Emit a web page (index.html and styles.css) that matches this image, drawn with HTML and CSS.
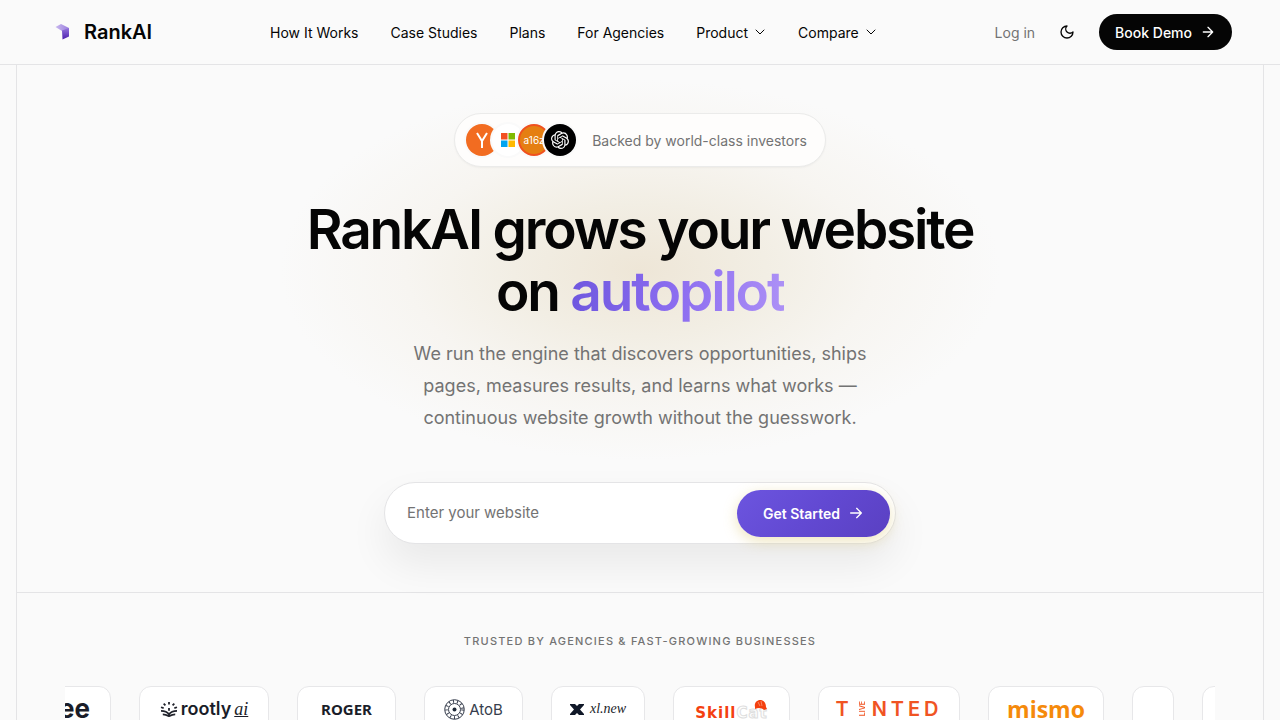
FILE: index.html
```html
<!DOCTYPE html>
<html lang="en">
<head>
  <meta charset="UTF-8" />
  <meta name="viewport" content="width=device-width, initial-scale=1.0"/>
  <title>RankAI</title>
  <link rel="stylesheet" href="styles.css">
</head>
<body>
  <header class="site-header">
    <a class="brand" href="#">
      <svg class="brand-mark" width="28" height="28" viewBox="0 0 28 28" aria-hidden="true">
        <defs>
          <linearGradient id="markTop" x1="0" y1="0" x2="1" y2="0"><stop offset="0" stop-color="#c9b9ee"/><stop offset="1" stop-color="#9a7ede"/></linearGradient>
          <linearGradient id="markSide" x1="0" y1="0" x2="0" y2="1"><stop offset="0" stop-color="#9474dd"/><stop offset="1" stop-color="#4b1fae"/></linearGradient>
        </defs>
        <path d="M7.500 9 13 6l8 4v5L14 13Z" fill="url(#markTop)"/>
        <path d="M14 12.500l7-2.500v8.500L14.500 21.500Z" fill="url(#markSide)"/>
      </svg>
      <span>RankAI</span>
    </a>
    <nav class="main-nav">
      <a href="#">How It Works</a>
      <a href="#">Case Studies</a>
      <a href="#">Plans</a>
      <a href="#">For Agencies</a>
      <button type="button">Product <svg class="icon" width="12" height="12" viewBox="0 0 24 24"><path d="m4 8 8 8 8-8"/></svg></button>
      <button type="button">Compare <svg class="icon" width="12" height="12" viewBox="0 0 24 24"><path d="m4 8 8 8 8-8"/></svg></button>
    </nav>
    <div class="actions">
      <a class="login" href="#">Log in</a>
      <button class="theme-toggle" type="button" aria-label="Toggle theme">
        <svg class="icon" width="16" height="16" viewBox="0 0 24 24"><path d="M12 3a6 6 0 0 0 9 9 9 9 0 1 1-9-9Z"/></svg>
      </button>
      <a class="demo-btn" href="#">Book Demo <svg class="icon" width="16" height="16" viewBox="0 0 24 24"><path d="M5 12h14M12 5l7 7-7 7"/></svg></a>
    </div>
  </header>

  <main class="page">
    <section class="hero">
      <div class="investors">
        <div class="avatars">
          <span class="avatar avatar-yc"><svg width="14" height="18" viewBox="0 0 14 18" fill="none" stroke="#fff" stroke-width="2"><path d="M2 2l5 8 5-8M7 10v7"/></svg></span>
          <span class="avatar avatar-ms">
            <svg width="14" height="14" viewBox="0 0 14 14"><path fill="#f25022" d="M0 0h6.500v6.500H0z"/><path fill="#7fba00" d="M7.500 0H14v6.500H7.500z"/><path fill="#00a4ef" d="M0 7.500h6.500V14H0z"/><path fill="#ffb900" d="M7.500 7.500H14V14H7.500z"/></svg>
          </span>
          <span class="avatar avatar-a16z">a16z</span>
          <span class="avatar avatar-openai">
            <svg width="18" height="18" viewBox="0 0 24 24" fill="#fff"><path d="M22.282 9.821a5.985 5.985 0 0 0-.516-4.910 6.046 6.046 0 0 0-6.510-2.900A6.065 6.065 0 0 0 4.981 4.182a5.985 5.985 0 0 0-3.998 2.900 6.046 6.046 0 0 0 .743 7.097 5.980 5.980 0 0 0 .510 4.911 6.051 6.051 0 0 0 6.515 2.900A5.985 5.985 0 0 0 13.260 24a6.056 6.056 0 0 0 5.772-4.206 5.990 5.990 0 0 0 3.997-2.900 6.056 6.056 0 0 0-.747-7.073zM13.260 22.430a4.476 4.476 0 0 1-2.876-1.040l.141-.081 4.779-2.758a.795.795 0 0 0 .392-.681v-6.737l2.020 1.168a.071.071 0 0 1 .038.052v5.583a4.504 4.504 0 0 1-4.494 4.494zM3.600 18.304a4.470 4.470 0 0 1-.535-3.014l.142.085 4.783 2.759a.771.771 0 0 0 .780 0l5.843-3.369v2.332a.080.080 0 0 1-.033.062L9.740 19.950a4.500 4.500 0 0 1-6.140-1.646zM2.340 7.896a4.485 4.485 0 0 1 2.366-1.973V11.600a.766.766 0 0 0 .388.676l5.815 3.355-2.020 1.168a.076.076 0 0 1-.071 0l-4.830-2.786A4.504 4.504 0 0 1 2.340 7.872zm16.597 3.855l-5.833-3.387L15.119 7.200a.076.076 0 0 1 .071 0l4.830 2.791a4.494 4.494 0 0 1-.676 8.105v-5.678a.790.790 0 0 0-.407-.667zm2.010-3.023l-.141-.085-4.774-2.782a.776.776 0 0 0-.785 0L9.409 9.230V6.897a.066.066 0 0 1 .028-.061l4.830-2.787a4.500 4.500 0 0 1 6.680 4.660zm-12.640 4.135l-2.020-1.164a.080.080 0 0 1-.038-.057V6.075a4.500 4.500 0 0 1 7.375-3.453l-.142.080L8.704 5.460a.795.795 0 0 0-.393.681zm1.097-2.365l2.602-1.500 2.607 1.500v2.999l-2.597 1.500-2.607-1.500Z"/></svg>
          </span>
        </div>
        <span>Backed by world-class investors</span>
      </div>

      <h1>RankAI grows your website<br>on <span class="accent">autopilot</span></h1>
      <p class="lead">We run the engine that discovers opportunities, ships pages, measures results, and learns what works — continuous website growth without the guesswork.</p>

      <form class="signup">
        <input type="text" placeholder="Enter your website" aria-label="Your website">
        <button type="submit">Get Started <svg class="icon" width="16" height="16" viewBox="0 0 24 24"><path d="M4 12h16M13 5l7 7-7 7"/></svg></button>
      </form>
    </section>

    <section class="trusted">
      <h2>Trusted by agencies &amp; fast-growing businesses</h2>
      <div class="marquee">
        <div class="track">
          <div class="logo logo-ee">ee</div>
          <div class="logo logo-rootly">
            <svg width="18" height="16" viewBox="0 0 20 18" fill="none" stroke="#20222b" stroke-width="2"><path d="M1 11c4 0 7 1 9 4 2-3 5-4 9-4M3 15c3 0 5 1 7 2 2-1 4-2 7-2M10 1v3M4 3l2 2M16 3l-2 2M1 7l3 1M19 7l-3 1M10 8v3"/></svg>
            <span>rootly</span><em>ai</em>
          </div>
          <div class="logo logo-roger">ROGER</div>
          <div class="logo logo-atob">
            <svg width="21" height="21" viewBox="0 0 21 21" fill="none" stroke="#373e4d"><circle cx="10.500" cy="10.500" r="9.800"/><circle cx="10.500" cy="10.500" r="6"/><circle cx="10.500" cy="10.500" r="8" stroke-width="3" stroke-dasharray="1 3"/><circle cx="10.500" cy="10.500" r="2" fill="#1f2937" stroke="none"/></svg>
            <span>AtoB</span>
          </div>
          <div class="logo logo-xl">
            <svg width="14" height="11" viewBox="0 0 14 11" fill="#101828"><path d="M0 0h5l2 2 2-2h5v1l-4 4.500L14 10v1H9L7 9l-2 2H0v-1l4-4.500L0 1z"/></svg>
            <em>xl.new</em>
          </div>
          <div class="logo logo-skillcat">
            <span>Skill</span><span class="cat">Cat</span>
            <svg class="cap" width="13" height="10" viewBox="0 0 13 10"><path d="M1 7C0 3 3 0 6 0c4 0 6 3 6 7l1 2-3 1C8 8 5 7 1 9Z" fill="#f4400f"/><path d="M4 2l2 4M7 1l1 5" stroke="#fa8563" fill="none"/></svg>
          </div>
          <div class="logo logo-tinted"><span>T</span><small>LIVE</small><span>NTED</span></div>
          <div class="logo logo-mismo">mismo</div>
          <div class="logo logo-blank"></div>
          <div class="logo logo-blank"></div>
        </div>
      </div>
    </section>
  </main>
</body>
</html>
```

FILE: styles.css
```css
* { box-sizing: border-box; }
body {
  margin: 0;
  background: #fafafa;
  color: #050505;
  font-family: Inter, "Liberation Sans", sans-serif;
  font-size: 14px;
  overflow-x: hidden;
}
a { color: inherit; text-decoration: none; }
button, input { font: inherit; color: inherit; border: 0; background: none; padding: 0; }
button { cursor: pointer; }
.icon { fill: none; stroke: currentColor; stroke-width: 2; stroke-linecap: round; stroke-linejoin: round; }

/* header */
.site-header {
  display: flex;
  align-items: center;
  justify-content: space-between;
  height: 65px;
  padding: 0 48px;
  border-bottom: 1px solid #e4e4e6;
}
.brand { display: flex; align-items: center; gap: 8px; font-size: 20px; font-weight: 600; }
.main-nav { display: flex; align-items: center; gap: 32px; }
.main-nav button { display: flex; align-items: center; gap: 6px; }
.actions { display: flex; align-items: center; gap: 24px; }
.login { color: #737373; }
.theme-toggle { display: flex; }
.demo-btn {
  display: flex;
  align-items: center;
  gap: 8px;
  height: 36px;
  padding: 0 16px;
  border-radius: 18px;
  background: #050505;
  color: #fff;
  font-weight: 500;
}

/* hero */
.page { margin: 0 16px; border: 1px solid #e4e4e6; border-width: 0 1px; }
.hero {
  display: flex;
  flex-direction: column;
  align-items: center;
  padding: 48px 24px;
  border-bottom: 1px solid #e4e4e6;
  text-align: center;
  background: radial-gradient(ellipse 360px 190px at 50% 205px, #eee6d7 0%, #f2eee4 35%, #f7f5f1 65%, #fafafa 100%);
}
.investors {
  display: flex;
  align-items: center;
  gap: 16px;
  height: 54px;
  padding: 0 18px 0 11px;
  border: 1px solid #ebebea;
  border-radius: 27px;
  background: #fefdfc;
  color: #737373;
  box-shadow: 0 1px 2px rgba(0,0,0,0.04);
}
.avatars { display: flex; }
.avatar {
  display: flex;
  align-items: center;
  justify-content: center;
  width: 32px;
  height: 32px;
  margin-right: -6px;
  border-radius: 50%;
  box-shadow: 0 0 0 2px #fafafa;
  color: #fff;
}
.avatar:last-child { margin-right: 0; }
.avatar-yc { background: #f26c21; }
.avatar-ms { background: #fff; }
.avatar-a16z { background: #e57f12; border: 2px solid #f0501e; font-size: 10px; }
.avatar-openai { background: #000; }
h1 {
  margin: 31px 0 0;
  font-size: 55px;
  font-weight: 600;
  line-height: 62px;
  letter-spacing: -0.04em;
}
.accent {
  background: linear-gradient(90deg, #6f57df, #8c6df0 50%, #ac90f6);
  -webkit-background-clip: text;
  background-clip: text;
  color: transparent;
}
.lead {
  max-width: 480px;
  margin: 16px 0 48px;
  color: #737373;
  font-size: 18px;
  line-height: 32px;
}
.signup {
  display: flex;
  align-items: center;
  width: 100%;
  max-width: 512px;
  height: 62px;
  padding: 0 5px 0 22px;
  border: 1px solid #e4e4e6;
  border-radius: 31px;
  background: #fff;
  box-shadow: 0 20px 40px rgba(0,0,0,0.07);
}
.signup input { flex: 1; min-width: 0; padding-bottom: 2px; outline: none; font-size: 15px; }
.signup input::placeholder { color: #737373; opacity: 1; }
.signup button {
  display: flex;
  align-items: center;
  gap: 8px;
  height: 47px;
  padding: 0 26px;
  border-radius: 24px;
  background: linear-gradient(135deg, #6c55df, #6249d2 50%, #5a40c2);
  color: #fff;
  font-weight: 600;
  box-shadow: 0 4px 14px rgba(214,190,90,0.4);
}

/* customer logos */
.trusted { padding: 40px 48px 0; }
.trusted h2 {
  margin: 0 0 36px;
  color: #737373;
  font-size: 11px;
  font-weight: 500;
  line-height: 17px;
  letter-spacing: 0.11em;
  text-align: center;
  text-transform: uppercase;
}
.marquee { overflow: hidden; }
.track { display: flex; gap: 28px; margin-left: -60px; }
.logo {
  display: flex;
  flex: none;
  align-items: center;
  justify-content: center;
  height: 46px;
  border: 1px solid #e7e7e9;
  border-radius: 12px;
  background: #fff;
  color: #1a1d29;
  line-height: 1;
}
.logo-ee { width: 106px; padding-right: 20px; justify-content: flex-end; font-size: 26px; font-weight: 700; }
.logo-rootly { width: 130px; gap: 3px; font-size: 18px; font-weight: 600; }
.logo-rootly em { font-family: "Liberation Serif", serif; font-weight: 400; text-decoration: underline; }
.logo-roger { width: 99px; font-family: "Noto Sans", sans-serif; font-size: 15px; font-weight: 700; }
.logo-atob { width: 99px; gap: 4px; font-size: 15px; color: #373e4d; }
.logo-xl { width: 94px; gap: 6px; font-family: "Liberation Serif", serif; font-size: 14px; }
.logo-skillcat { position: relative; width: 117px; padding-top: 8px; font-family: "DejaVu Sans", sans-serif; font-size: 15px; font-weight: 700; letter-spacing: 1px; color: #f4400f; }
.cat { color: #fff; -webkit-text-stroke: 1px #dedede; }
.cap { position: absolute; top: 13px; right: 22px; }
.logo-tinted { width: 142px; gap: 6px; font-size: 20px; font-weight: 600; color: #f05423; letter-spacing: 4px; }
.logo-tinted small { font-size: 7px; letter-spacing: 0; writing-mode: vertical-rl; transform: rotate(180deg); }
.logo-mismo { width: 116px; font-family: "Open Sans", sans-serif; font-size: 23px; font-weight: 700; color: #f58a0b; }
.logo-blank { width: 42px; }
```
